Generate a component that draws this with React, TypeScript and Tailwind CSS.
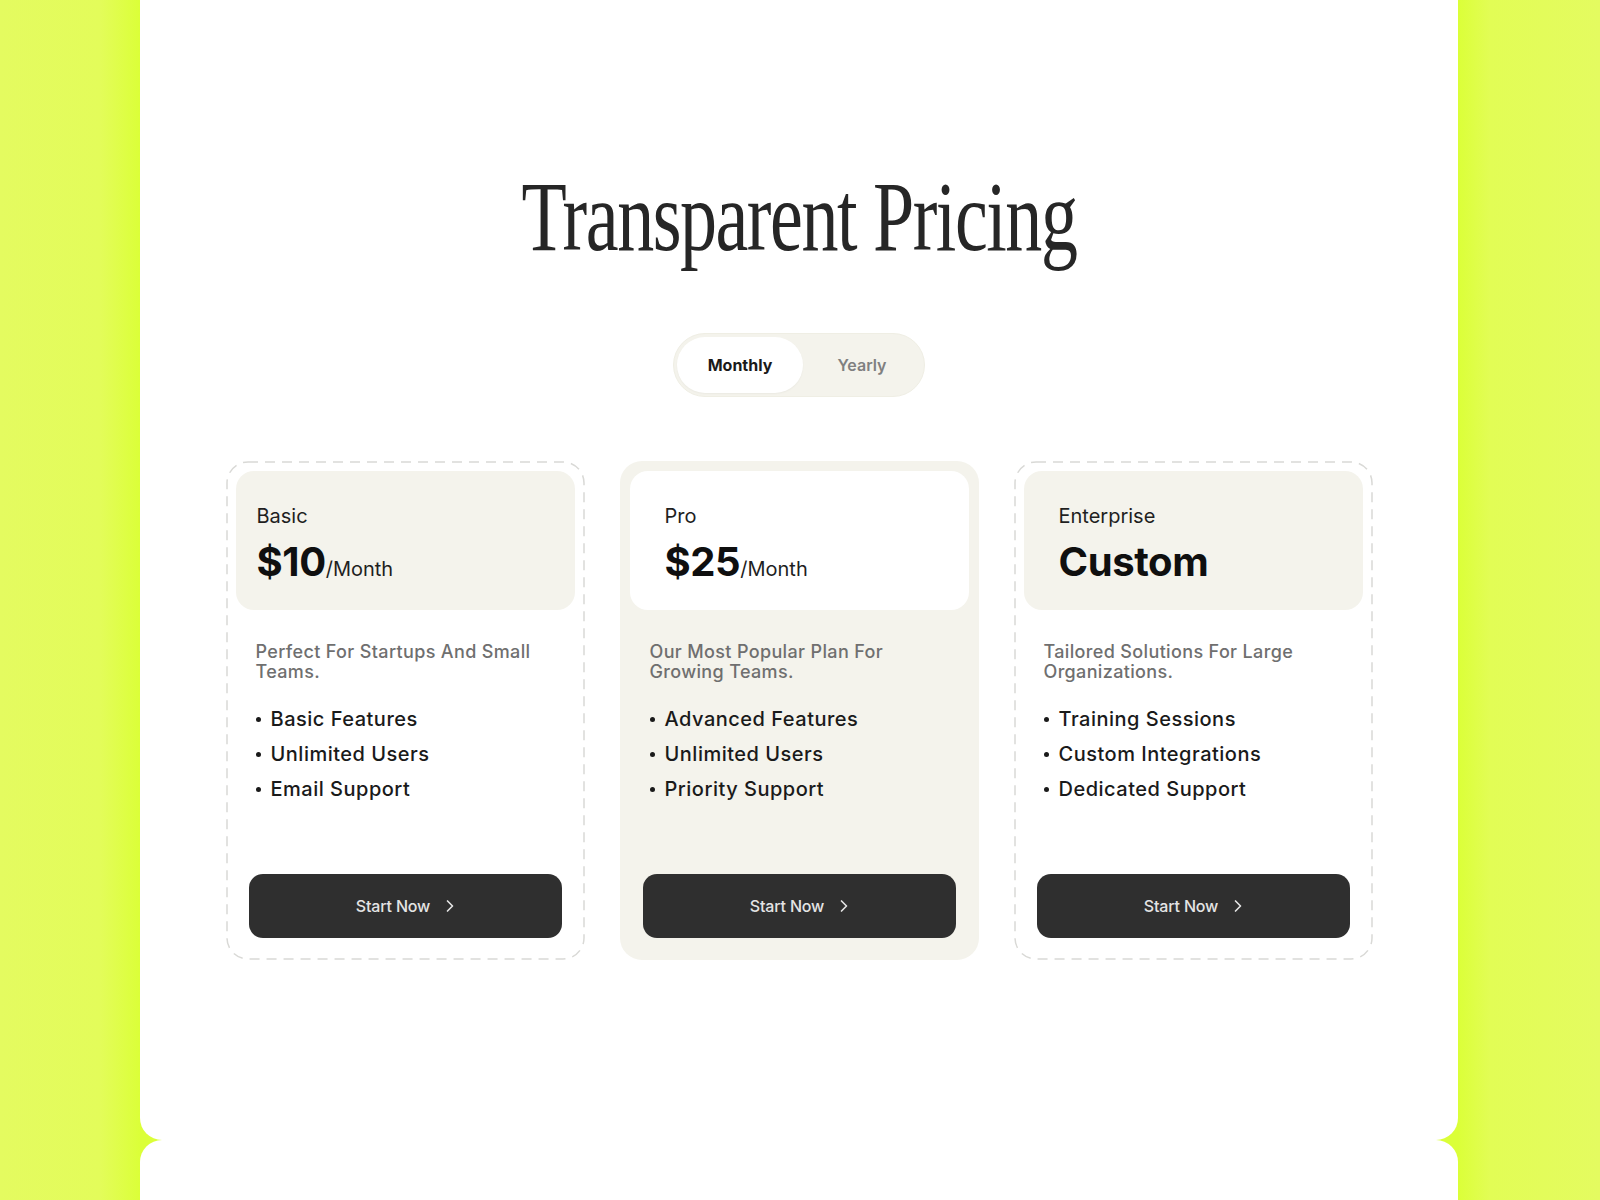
import React from 'react';
import { ChevronRight } from 'lucide-react';

interface Plan {
  name: string;
  price: string;
  unit?: string;
  description: [string, string];
  features: string[];
  featured?: boolean;
  headerPad: string;
}

const plans: Plan[] = [
  {
    name: 'Basic',
    price: '$10',
    unit: '/Month',
    description: ['Perfect For Startups And Small', 'Teams.'],
    features: ['Basic Features', 'Unlimited Users', 'Email Support'],
    headerPad: 'pl-[21px]',
  },
  {
    name: 'Pro',
    price: '$25',
    unit: '/Month',
    description: ['Our Most Popular Plan For', 'Growing Teams.'],
    features: ['Advanced Features', 'Unlimited Users', 'Priority Support'],
    featured: true,
    headerPad: 'pl-[35px]',
  },
  {
    name: 'Enterprise',
    price: 'Custom',
    description: ['Tailored Solutions For Large', 'Organizations.'],
    features: ['Training Sessions', 'Custom Integrations', 'Dedicated Support'],
    headerPad: 'pl-[35px]',
  },
];

const DashedOutline: React.FC = () => (
  <svg className="pointer-events-none absolute inset-0 h-full w-full" aria-hidden="true">
    <rect
      x="1"
      y="1"
      width="calc(100% - 2px)"
      height="calc(100% - 2px)"
      rx="21"
      fill="none"
      stroke="#d9d9d6"
      strokeWidth="1.5"
      strokeDasharray="10 7"
    />
  </svg>
);

const PlanCard: React.FC<{ plan: Plan }> = ({ plan }) => (
  <div
    className={`relative flex h-[499px] w-[359px] flex-col rounded-[22px] p-[10px] pb-[22px] ${
      plan.featured ? 'bg-[#f4f3ec]' : 'bg-white'
    }`}
  >
    {!plan.featured && <DashedOutline />}

    <div
      className={`h-[139px] rounded-[18px] pt-[31px] ${plan.headerPad} ${
        plan.featured ? 'bg-white' : 'bg-[#f4f3ec]'
      }`}
    >
      <p className="text-[20px] leading-[28px] text-[#1f1f1f]">{plan.name}</p>
      <p className="mt-3 text-[40px] font-bold leading-none tracking-[-0.01em] text-[#0f0f0f]">
        {plan.price}
        {plan.unit && (
          <span className="text-[20px] font-normal tracking-normal text-[#1f1f1f]">{plan.unit}</span>
        )}
      </p>
    </div>

    <p className="mt-[32px] px-[20px] text-[18px] font-medium leading-[20px] tracking-[0.35px] text-[#6f6f6f]">
      {plan.description[0]}
      <br />
      {plan.description[1]}
    </p>

    <ul className="mt-5 px-[20px]">
      {plan.features.map((feature) => (
        <li
          key={feature}
          className="flex items-center gap-[10px] text-[20px] font-medium leading-[35px] tracking-[0.5px] text-[#1a1a1a]"
        >
          <span className="h-[5px] w-[5px] rounded-full bg-[#1a1a1a]" />
          {feature}
        </li>
      ))}
    </ul>

    <button className="mx-[13px] mt-auto flex h-[64px] items-center justify-center gap-[10px] rounded-[14px] bg-[#2f2f2f] text-[16px] font-medium tracking-[-0.01em] text-[#e4e4e4]">
      Start Now
      <ChevronRight size={20} strokeWidth={2} className="-mr-[6px]" />
    </button>
  </div>
);

export default function App() {
  return (
    <div
      className="h-[1200px] overflow-hidden bg-[linear-gradient(90deg,#e4fb60_0px,#e3fc5a_100px,#dbff38_140px,#dbff38_1458px,#e2fd55_1490px,#e4fb60_1600px)]"
      style={{ fontFamily: 'Inter, "Noto Sans", sans-serif' }}
    >
      <section className="ml-[140px] flex h-[1140px] w-[1318px] flex-col items-center rounded-b-[22px] bg-white pt-[167px]">
        <h1
          className="inline-block scale-x-[0.74] text-[100px] leading-none tracking-[-2px] text-[#262626]"
          style={{ fontFamily: '"Liberation Serif", "Times New Roman", serif' }}
        >
          Transparent Pricing
        </h1>

        <div className="mt-[66px] flex h-[64px] w-[252px] items-center rounded-full border border-[#efeee4] bg-[#f4f3ec] p-[3px]">
          <button className="h-[56px] w-[126px] rounded-full bg-white text-[16px] font-bold text-[#1a1a1a] shadow-[0_1px_2px_rgba(0,0,0,0.04)]">
            Monthly
          </button>
          <button className="flex-1 text-[16px] font-semibold text-[#808080]">Yearly</button>
        </div>

        <div className="mt-[64px] flex gap-[35px]">
          {plans.map((plan) => (
            <PlanCard key={plan.name} plan={plan} />
          ))}
        </div>
      </section>

      <section className="ml-[140px] h-[60px] w-[1318px] rounded-t-[22px] bg-white" />
    </div>
  );
}
